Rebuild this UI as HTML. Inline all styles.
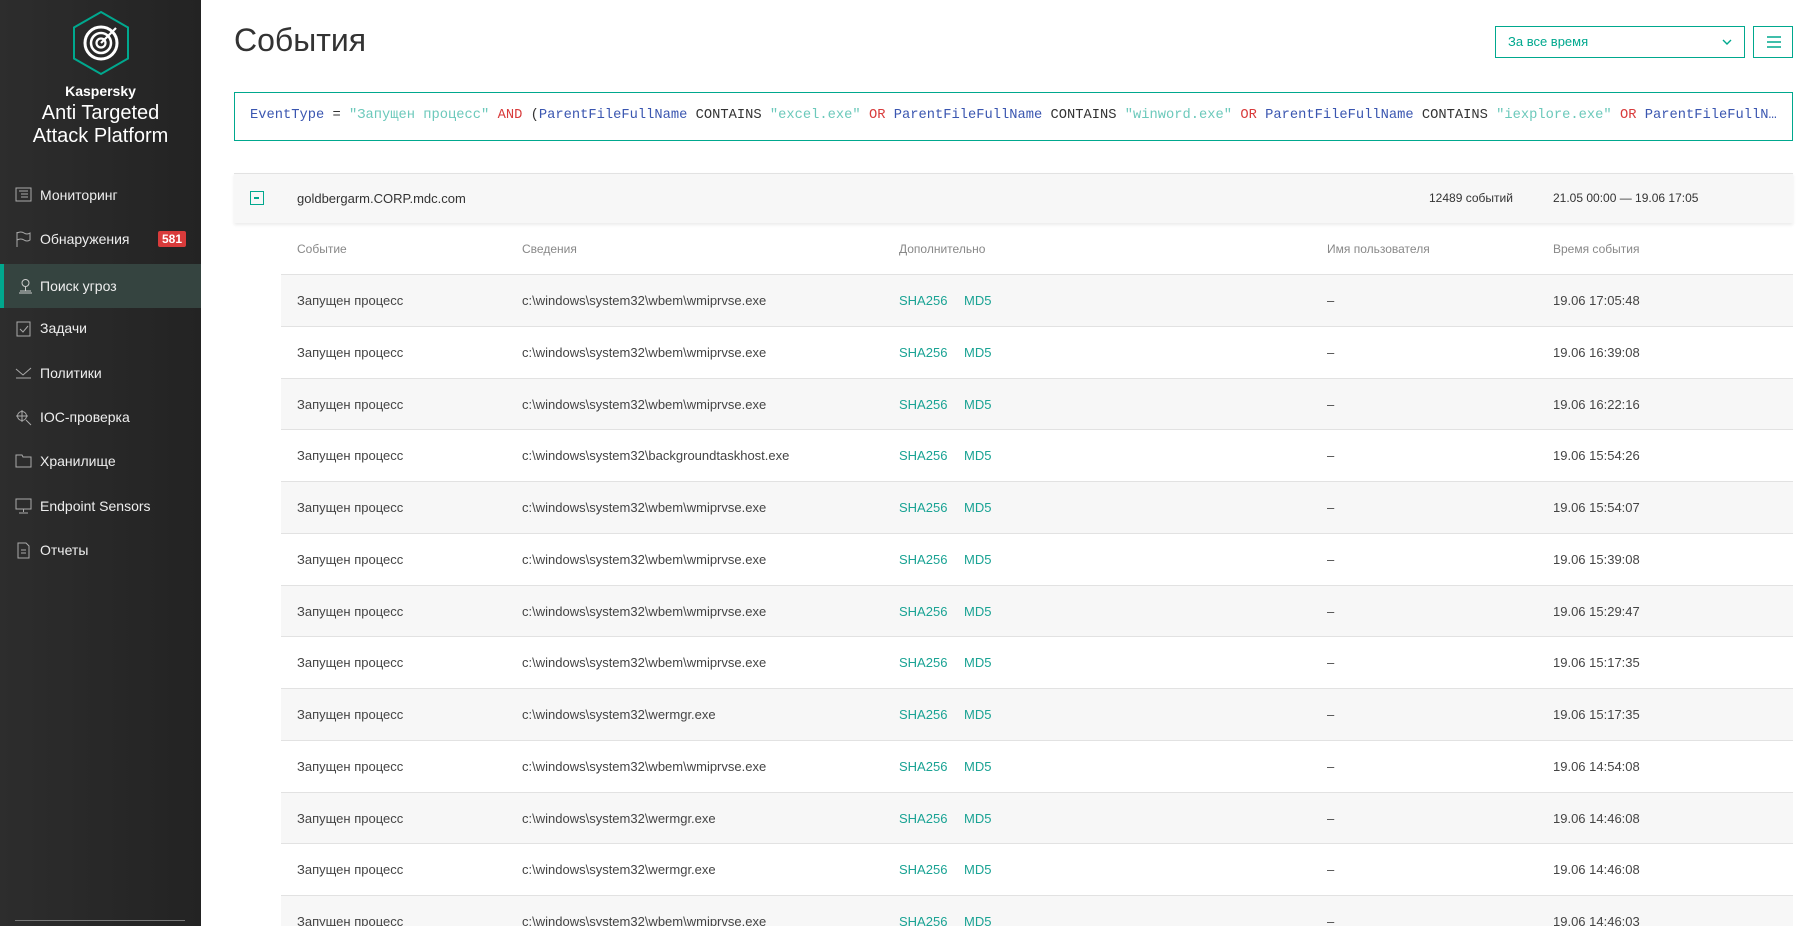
<!DOCTYPE html>
<html><head><meta charset="utf-8"><style>
*{box-sizing:border-box;margin:0;padding:0}
html{width:1815px;height:926px;overflow:hidden}
body{width:1815px;height:926px;overflow:hidden;background:#fff;font-family:"Liberation Sans","Noto Sans CJK SC",sans-serif;color:#333;position:relative}
.sb{position:absolute;left:0;top:0;width:201px;height:926px;background:linear-gradient(90deg,#2d2d2d,#232323)}
.brand{position:absolute;left:0;width:201px;text-align:center;color:#fff}
.nav{position:absolute;left:0;width:201px;height:44px;display:flex;align-items:center;padding-left:40px;color:#eee;font-size:14px}
.nav svg{position:absolute;left:15px;top:14px}
.nav.act{background:#354440;border-left:4px solid #00a88e;padding-left:36px}
.nav.act svg{left:13px}
.badge{position:absolute;left:158px;top:14px;background:#d83b3b;color:#fff;font-size:12px;font-weight:bold;padding:1px 4px;border-radius:2px;line-height:14px}
h1{position:absolute;left:234px;top:22px;font-weight:normal;font-size:32px;color:#333}
.dd{position:absolute;left:1495px;top:26px;width:250px;height:32px;border:1px solid #00a88e;color:#00a88e;font-size:13px;padding:7px 12px}
.mb{position:absolute;left:1753px;top:26px;width:40px;height:32px;border:1px solid #00a88e}
.q{position:absolute;left:234px;top:92px;width:1559px;height:49px;border:1px solid #00a88e;font-family:"Liberation Mono",monospace;font-size:13.75px;padding:15px 15px;white-space:nowrap;overflow:hidden;color:#333}
.k{color:#3a56b0}.s{color:#6cc9bb}.o{color:#d83b3b}
.grp{position:absolute;left:234px;top:173px;width:1559px;height:50px;background:#f7f7f7;border-top:1px solid #e2e2e2;box-shadow:0 2px 3px rgba(0,0,0,.08);font-size:13px}
.grp span{position:absolute;top:17px}
.cb{position:absolute;left:16px;top:17px;width:14px;height:14px;border:1.5px solid #00a88e}
.cb:after{content:"";position:absolute;left:3px;top:5px;width:5px;height:1.5px;background:#00a88e}
.hd{position:absolute;top:242px;font-size:12px;color:#888}
.row{position:absolute;left:281px;width:1512px;height:51.75px;border-top:1px solid #e2e2e2;font-size:13px;color:#444}
.row.g{background:#f7f7f7}
.row span{position:absolute;top:18px;white-space:nowrap}
.h{color:#1aa394}
</style></head><body>
<div class="sb">
<svg style="position:absolute;left:71px;top:10px" width="60" height="66" viewBox="0 0 60 66"><polygon points="30,2 57,17.5 57,48.5 30,64 3,48.5 3,17.5" fill="none" stroke="#00a88e" stroke-width="2"/><circle cx="30" cy="33" r="16" fill="none" stroke="#fff" stroke-width="3"/><circle cx="30" cy="33" r="10" fill="none" stroke="#fff" stroke-width="2.5"/><circle cx="30" cy="33" r="4.5" fill="none" stroke="#fff" stroke-width="2.2"/><line x1="30" y1="33" x2="45" y2="18" stroke="#fff" stroke-width="2.2"/></svg>
<div class="brand" style="top:83px;font-size:14px;font-weight:bold">Kaspersky</div>
<div class="brand" style="top:102px;font-size:20px;line-height:23px">Anti Targeted<br>Attack Platform</div>
<div class="nav" style="top:173px"><svg width="17" height="15"><rect x="1" y="1" width="15" height="13" fill="none" stroke="#aaa"/><path d="M4 4h9M6 7h7M6 10h7" stroke="#aaa"/></svg>Мониторинг</div>
<div class="nav" style="top:217px"><svg width="17" height="17"><path d="M2 1v15M2 2q4-2 7 0t6 0v7q-3 2-6 0t-7 0" fill="none" stroke="#aaa"/></svg>Обнаружения<span class="badge">581</span></div>
<div class="nav act" style="top:264px"><svg width="17" height="17"><circle cx="8.5" cy="5" r="3.5" fill="none" stroke="#ccc"/><path d="M8.5 9v4M2 15h13M3 13h11" stroke="#ccc" fill="none"/></svg>Поиск угроз</div>
<div class="nav" style="top:306px"><svg width="17" height="17"><rect x="2" y="2" width="13" height="14" fill="none" stroke="#aaa"/><path d="M5 9l3 3 5-6" fill="none" stroke="#aaa"/></svg>Задачи</div>
<div class="nav" style="top:351px"><svg width="17" height="15"><path d="M1 4l7 6 8-7M1 13h15" fill="none" stroke="#aaa"/></svg>Политики</div>
<div class="nav" style="top:395px"><svg width="17" height="17"><circle cx="7" cy="7" r="4.5" fill="none" stroke="#aaa"/><path d="M11 11l5 5M7 1v12M1 7h12" stroke="#aaa"/></svg>IOC-проверка</div>
<div class="nav" style="top:439px"><svg width="17" height="15"><path d="M1 2h6l1 2h8v10H1z" fill="none" stroke="#aaa"/></svg>Хранилище</div>
<div class="nav" style="top:484px"><svg width="17" height="17"><rect x="1" y="1" width="15" height="10" fill="none" stroke="#aaa"/><path d="M8.5 11v3M4 15h9" stroke="#aaa"/></svg>Endpoint Sensors</div>
<div class="nav" style="top:528px"><svg width="17" height="17"><path d="M3 1h8l3 3v12H3z" fill="none" stroke="#aaa"/><path d="M6 8h5M6 11h5" stroke="#aaa"/></svg>Отчеты</div>
<div style="position:absolute;left:15px;top:920px;width:170px;height:1px;background:#777"></div>
</div>
<h1>События</h1>
<div class="dd">За все время<svg style="position:absolute;right:12px;top:12px" width="10" height="6"><path d="M1 1l4 4 4-4" fill="none" stroke="#00a88e" stroke-width="1.4"/></svg></div>
<div class="mb"><svg style="position:absolute;left:13px;top:9px" width="14" height="12"><path d="M0 1h14M0 6h14M0 11h14" stroke="#00a88e" stroke-width="1.6"/></svg></div>
<div class="q"><span class="k">EventType</span> = <span class="s">"Запущен процесс"</span> <span class="o">AND</span> (<span class="k">ParentFileFullName</span> CONTAINS <span class="s">"excel.exe"</span> <span class="o">OR</span> <span class="k">ParentFileFullName</span> CONTAINS <span class="s">"winword.exe"</span> <span class="o">OR</span> <span class="k">ParentFileFullName</span> CONTAINS <span class="s">"iexplore.exe"</span> <span class="o">OR</span> <span class="k">ParentFileFullN…</span></div>
<div class="grp"><div class="cb"></div><span style="left:63px">goldbergarm.CORP.mdc.com</span><span style="left:1195px;font-size:12px">12489 событий</span><span style="left:1319px;font-size:12px">21.05 00:00 — 19.06 17:05</span></div>
<div class="hd" style="left:297px">Событие</div><div class="hd" style="left:522px">Сведения</div><div class="hd" style="left:899px">Дополнительно</div><div class="hd" style="left:1327px">Имя пользователя</div><div class="hd" style="left:1553px">Время события</div>
<div id="rows"></div>
<script>
var d=[["c:\\windows\\system32\\wbem\\wmiprvse.exe","19.06 17:05:48"],["c:\\windows\\system32\\wbem\\wmiprvse.exe","19.06 16:39:08"],["c:\\windows\\system32\\wbem\\wmiprvse.exe","19.06 16:22:16"],["c:\\windows\\system32\\backgroundtaskhost.exe","19.06 15:54:26"],["c:\\windows\\system32\\wbem\\wmiprvse.exe","19.06 15:54:07"],["c:\\windows\\system32\\wbem\\wmiprvse.exe","19.06 15:39:08"],["c:\\windows\\system32\\wbem\\wmiprvse.exe","19.06 15:29:47"],["c:\\windows\\system32\\wbem\\wmiprvse.exe","19.06 15:17:35"],["c:\\windows\\system32\\wermgr.exe","19.06 15:17:35"],["c:\\windows\\system32\\wbem\\wmiprvse.exe","19.06 14:54:08"],["c:\\windows\\system32\\wermgr.exe","19.06 14:46:08"],["c:\\windows\\system32\\wermgr.exe","19.06 14:46:08"],["c:\\windows\\system32\\wbem\\wmiprvse.exe","19.06 14:46:03"]];
var h="";d.forEach(function(r,i){h+='<div class="row'+(i%2==0?' g':'')+'" style="top:'+(274+i*51.75)+'px"><span style="left:16px">Запущен процесс</span><span style="left:241px">'+r[0]+'</span><span class="h" style="left:618px">SHA256</span><span class="h" style="left:683px">MD5</span><span style="left:1046px">–</span><span style="left:1272px">'+r[1]+'</span></div>'});
document.getElementById("rows").innerHTML=h;
</script>
</body></html>
